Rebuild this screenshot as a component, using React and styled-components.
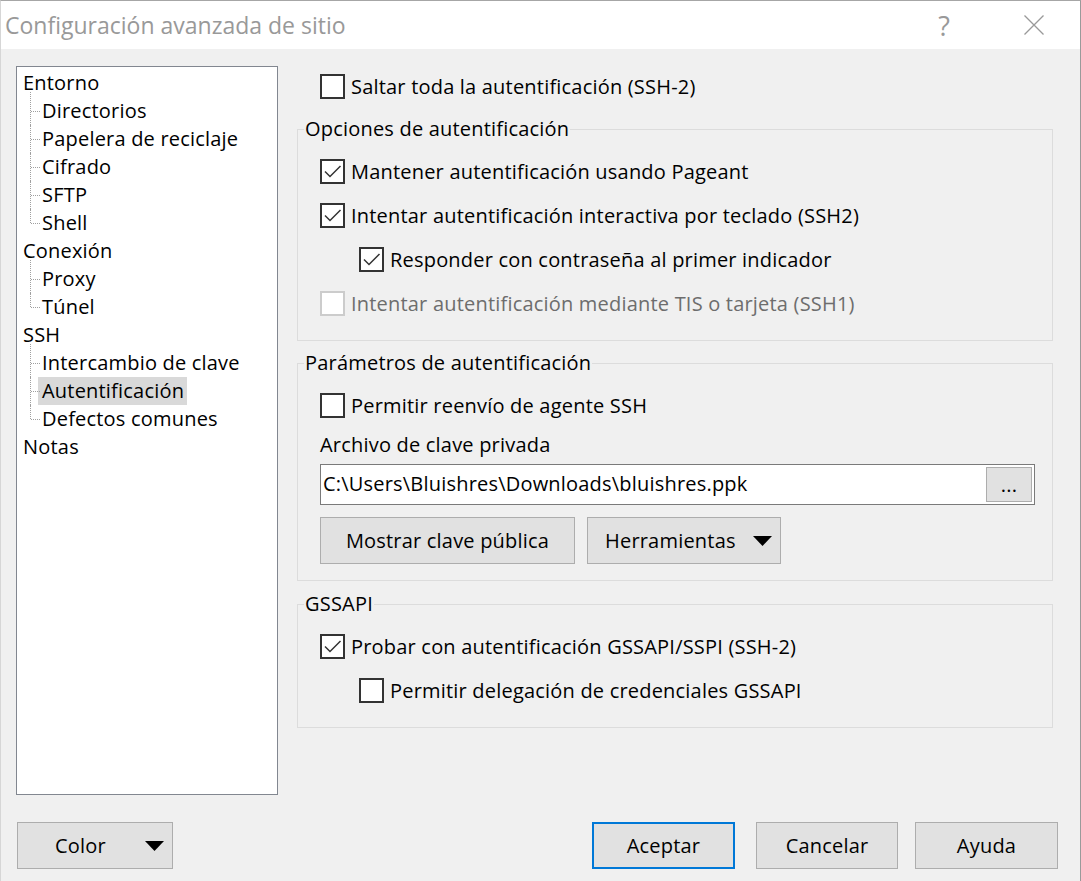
import React from "react";
import styled, { createGlobalStyle } from "styled-components";

const Global = createGlobalStyle`
  html, body {
    margin: 0;
    padding: 0;
    background: #f0f0f0;
  }
  * {
    box-sizing: border-box;
  }
`;

const FONT = `"Open Sans", "Noto Sans", "DejaVu Sans", sans-serif`;

const Window = styled.div`
  width: 1081px;
  height: 881px;
  display: flex;
  flex-direction: column;
  border-top: 1px solid #a6a6a6;
  border-left: 1px solid #d6d6d6;
  border-right: 1px solid #9a9a9a;
  background: #f0f0f0;
  font-family: ${FONT};
  font-size: 20px;
  letter-spacing: 0.2px;
  color: #000;
  overflow: hidden;
`;

const TitleBar = styled.div`
  height: 48px;
  flex: none;
  display: flex;
  align-items: center;
  background: #fff;
  padding-left: 4px;
`;

const Title = styled.div`
  flex: 1;
  font-size: 23px;
  letter-spacing: 0;
  color: #999;
`;

const HelpGlyph = styled.div`
  font-size: 27px;
  color: #999;
  margin-right: 74px;
  line-height: 1;
`;

const CloseIcon = styled.svg`
  width: 20px;
  height: 20px;
  margin-right: 36px;
`;

const Body = styled.div`
  flex: 1;
  display: flex;
  flex-direction: column;
  padding: 17px 0 0 15px;
`;

const Main = styled.div`
  display: flex;
  align-items: flex-start;
`;

const Tree = styled.div`
  width: 262px;
  height: 729px;
  flex: none;
  background: #fff;
  border: 1px solid #828790;
  padding-top: 2px;
  margin-right: 19px;
`;

const TreeItem = styled.div`
  position: relative;
  height: 28px;
  line-height: 28px;
  padding-left: ${(p) => (p.$child ? 21 : 2)}px;
  white-space: nowrap;

  ${(p) =>
    p.$child &&
    `
    &::before {
      content: "";
      position: absolute;
      left: 13px;
      top: ${p.$first ? -5 : 0}px;
      bottom: ${p.$last ? "50%" : "0"};
      border-left: 1px dotted #a0a0a0;
    }
    &::after {
      content: "";
      position: absolute;
      left: 14px;
      width: 9px;
      top: 50%;
      border-top: 1px dotted #a0a0a0;
    }
  `}
`;

const TreeLabel = styled.span`
  display: inline-block;
  padding: 0 3px 0 4px;
  background: ${(p) => (p.$selected ? "#d9d9d9" : "transparent")};
`;

const Panel = styled.div`
  width: 756px;
  display: flex;
  flex-direction: column;
`;

const CheckRow = styled.div`
  display: flex;
  align-items: center;
  height: ${(p) => p.$h || 44}px;
  padding-left: ${(p) => (p.$indent ? 39 : 0)}px;
  color: ${(p) => (p.$disabled ? "#6d6d6d" : "#000")};
  white-space: nowrap;
`;

const TopRow = styled(CheckRow)`
  margin-left: 23px;
`;

const Box = styled.span`
  width: 25px;
  height: 25px;
  flex: none;
  background: #fff;
  border: 2px solid ${(p) => (p.$disabled ? "#cccccc" : "#333333")};
  margin-right: 6px;
  display: flex;
  align-items: center;
  justify-content: center;
`;

const Group = styled.fieldset`
  margin: ${(p) => p.$gap || 0}px 0 0 0;
  padding: 0;
  border: 1px solid #dcdcdc;
  min-width: 0;
`;

const Legend = styled.legend`
  margin-left: 6px;
  padding: 0 1px;
  line-height: 26px;
`;

const GroupBody = styled.div`
  padding: 7px 17px ${(p) => p.$pb || 16}px 22px;
  display: flex;
  flex-direction: column;
`;

const FieldLabel = styled.div`
  line-height: 26px;
  margin-top: 5px;
`;

const PathField = styled.div`
  margin-top: 6px;
  height: 41px;
  display: flex;
  align-items: stretch;
  border: 1px solid #7a7a7a;
  background: #fff;
  padding: 2px;
`;

const PathText = styled.div`
  flex: 1;
  display: flex;
  align-items: center;
  padding-left: 0;
  padding-bottom: 3px;
`;

const Button = styled.button`
  font-family: ${FONT};
  font-size: 20px;
  letter-spacing: 0.2px;
  color: #000;
  background: #e1e1e1;
  border: ${(p) => (p.$default ? "2px solid #0078d7" : "1px solid #adadad")};
  height: ${(p) => p.$height || 47}px;
  width: ${(p) => p.$width}px;
  margin-left: ${(p) => p.$ml || 0}px;
  padding: 0;
  display: flex;
  align-items: center;
  justify-content: center;
  flex: none;
`;

const MenuButton = styled(Button)`
  justify-content: flex-start;
  padding-left: ${(p) => p.$pl}px;
`;

const Arrow = styled.svg`
  width: 19px;
  height: 10px;
  margin-left: auto;
  margin-right: ${(p) => p.$mr || 8}px;
`;

const EllipsisButton = styled(Button)`
  width: 46px;
  height: 35px;
  align-items: flex-end;
  padding-bottom: 6px;
  line-height: 1;
`;

const ButtonRow = styled.div`
  display: flex;
  margin-top: 12px;
`;

const Footer = styled.div`
  display: flex;
  margin-top: 27px;
  padding-left: 1px;
  padding-right: 22px;
`;

const Spacer = styled.div`
  flex: 1;
`;

const Check = ({ checked, disabled, indent, children }) => (
  <CheckRow $indent={indent} $disabled={disabled}>
    <Box $disabled={disabled}>
      {checked && (
        <svg width="21" height="21" viewBox="0 0 21 21">
          <path d="M3 10.5 L8 15.5 L18.5 5" fill="none" stroke="#333" strokeWidth="1.5" />
        </svg>
      )}
    </Box>
    {children}
  </CheckRow>
);

const DownArrow = ({ mr }) => (
  <Arrow $mr={mr} viewBox="0 0 19 10">
    <path d="M0 0 H19 L9.5 10 Z" fill="#000" />
  </Arrow>
);

const tree = [
  { label: "Entorno" },
  { label: "Directorios", child: true, first: true },
  { label: "Papelera de reciclaje", child: true },
  { label: "Cifrado", child: true },
  { label: "SFTP", child: true },
  { label: "Shell", child: true, last: true },
  { label: "Conexión" },
  { label: "Proxy", child: true, first: true },
  { label: "Túnel", child: true, last: true },
  { label: "SSH" },
  { label: "Intercambio de clave", child: true, first: true },
  { label: "Autentificación", child: true, selected: true },
  { label: "Defectos comunes", child: true, last: true },
  { label: "Notas" },
];

export default function App() {
  return (
    <>
      <Global />
      <Window>
        <TitleBar>
          <Title>Configuración avanzada de sitio</Title>
          <HelpGlyph>?</HelpGlyph>
          <CloseIcon viewBox="0 0 20 20">
            <path d="M0.5 0.5 L19.5 19.5 M19.5 0.5 L0.5 19.5" stroke="#999" strokeWidth="1.3" />
          </CloseIcon>
        </TitleBar>
        <Body>
          <Main>
            <Tree>
              {tree.map((t) => (
                <TreeItem key={t.label} $child={t.child} $first={t.first} $last={t.last}>
                  <TreeLabel $selected={t.selected}>{t.label}</TreeLabel>
                </TreeItem>
              ))}
            </Tree>
            <Panel>
              <TopRow $h={40}>
                <Box />
                Saltar toda la autentificación (SSH-2)
              </TopRow>

              <Group $gap={10}>
                <Legend>Opciones de autentificación</Legend>
                <GroupBody $pb={15}>
                  <Check checked>Mantener autentificación usando Pageant</Check>
                  <Check checked>Intentar autentificación interactiva por teclado (SSH2)</Check>
                  <Check checked indent>
                    Responder con contraseña al primer indicador
                  </Check>
                  <Check disabled>Intentar autentificación mediante TIS o tarjeta (SSH1)</Check>
                </GroupBody>
              </Group>

              <Group $gap={9}>
                <Legend>Parámetros de autentificación</Legend>
                <GroupBody>
                  <Check>Permitir reenvío de agente SSH</Check>
                  <FieldLabel>Archivo de clave privada</FieldLabel>
                  <PathField>
                    <PathText>C:\Users\Bluishres\Downloads\bluishres.ppk</PathText>
                    <EllipsisButton>...</EllipsisButton>
                  </PathField>
                  <ButtonRow>
                    <Button $width={255}>Mostrar clave pública</Button>
                    <MenuButton $width={194} $ml={12} $pl={17}>
                      Herramientas
                      <DownArrow mr={8} />
                    </MenuButton>
                  </ButtonRow>
                </GroupBody>
              </Group>

              <Group $gap={10}>
                <Legend>GSSAPI</Legend>
                <GroupBody $pb={15}>
                  <Check checked>Probar con autentificación GSSAPI/SSPI (SSH-2)</Check>
                  <Check indent>Permitir delegación de credenciales GSSAPI</Check>
                </GroupBody>
              </Group>
            </Panel>
          </Main>
          <Footer>
            <MenuButton $width={156} $pl={37}>
              Color
              <DownArrow mr={8} />
            </MenuButton>
            <Spacer />
            <Button $default $width={143}>Aceptar</Button>
            <Button $width={142} $ml={21}>Cancelar</Button>
            <Button $width={143} $ml={17}>Ayuda</Button>
          </Footer>
        </Body>
      </Window>
    </>
  );
}
